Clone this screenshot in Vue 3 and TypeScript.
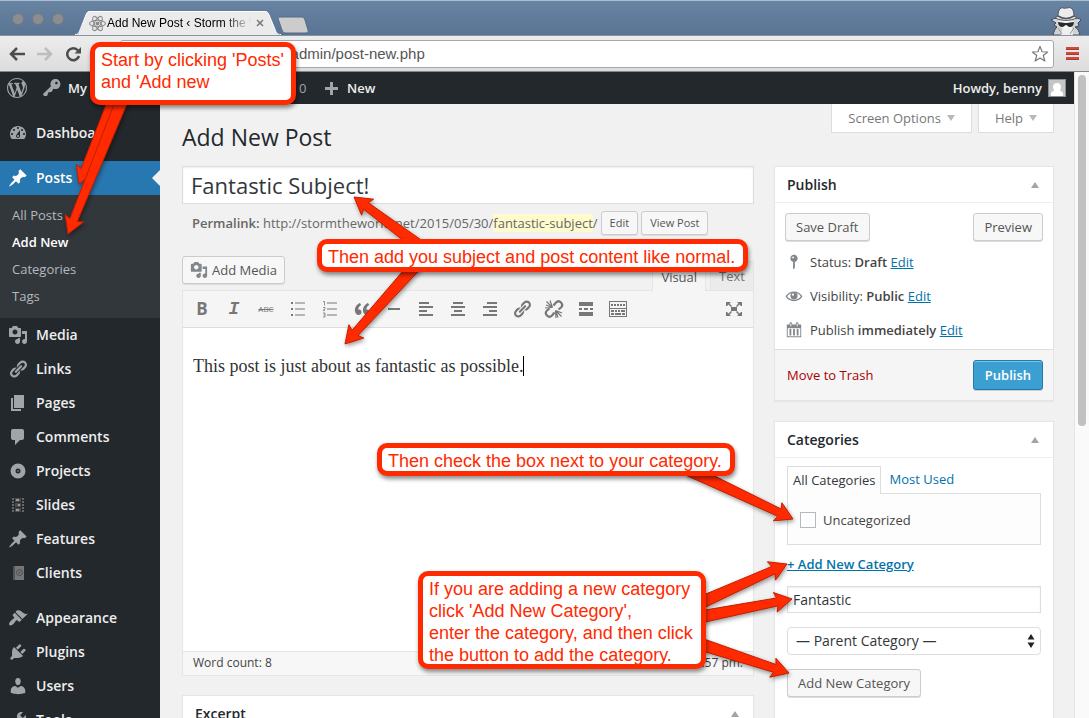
<script setup lang="ts">
import { ref } from 'vue'

interface MenuEntry {
  label: string
  icon: string
  spaced?: boolean
}

interface Point {
  x: number
  y: number
}

const icons: Record<string, string> = {
  dashboard:
    'M3.76 16h12.48c1.1-1.37 1.76-3.11 1.76-5 0-4.42-3.58-8-8-8s-8 3.58-8 8c0 1.89.66 3.63 1.76 5zM10 4c.55 0 1 .45 1 1s-.45 1-1 1-1-.45-1-1 .45-1 1-1zM6 6c.55 0 1 .45 1 1s-.45 1-1 1-1-.45-1-1 .45-1 1-1zm8 0c.55 0 1 .45 1 1s-.45 1-1 1-1-.45-1-1 .45-1 1-1zm-5.37 5.55L12 7v6c0 1.1-.9 2-2 2s-2-.9-2-2c0-.57.24-1.08.63-1.45zM4 10c.55 0 1 .45 1 1s-.45 1-1 1-1-.45-1-1 .45-1 1-1zm12 0c.55 0 1 .45 1 1s-.45 1-1 1-1-.45-1-1 .45-1 1-1zm-5 3c0-.55-.45-1-1-1s-1 .45-1 1 .45 1 1 1 1-.45 1-1z',
  pin: 'M10.44 3.02l1.82-1.82 6.36 6.35-1.83 1.82c-1.05-.68-2.48-.57-3.41.36l-.75.75c-.92.93-1.04 2.35-.35 3.41l-1.83 1.82-2.41-2.41-2.8 2.79c-.42.42-3.38 2.71-3.8 2.29s1.86-3.39 2.28-3.81l2.79-2.79L4.1 9.36l1.83-1.82c1.05.69 2.48.57 3.4-.36l.75-.75c.93-.92 1.05-2.35.36-3.41z',
  media:
    'M13 11V4c0-.55-.45-1-1-1h-1.67L9 1H5L3.67 3H2c-.55 0-1 .45-1 1v7c0 .55.45 1 1 1h10c.55 0 1-.45 1-1zM7 4.5c1.38 0 2.5 1.12 2.5 2.5S8.38 9.5 7 9.5 4.5 8.38 4.5 7 5.62 4.5 7 4.5zM14 6h5v10.5c0 1.38-1.12 2.5-2.5 2.5S14 17.88 14 16.5s1.12-2.5 2.5-2.5c.17 0 .34.02.5.05V9h-3V6zm-4 8.05V13h2v3.5c0 1.38-1.12 2.5-2.5 2.5S7 17.88 7 16.5 8.12 14 9.5 14c.17 0 .34.02.5.05z',
  link: 'M17.74 2.76c1.68 1.69 1.68 4.41 0 6.1l-1.53 1.52c-1.12 1.12-2.7 1.47-4.14 1.09l2.62-2.61.76-.77.76-.76c.84-.84.84-2.2 0-3.04-.84-.85-2.2-.85-3.04 0l-.77.76-3.38 3.38c-.37-1.44-.02-3.02 1.1-4.14l1.52-1.53c1.69-1.68 4.42-1.68 6.1 0zM8.59 13.43l5.34-5.34c.42-.42.42-1.1 0-1.52-.44-.43-1.13-.39-1.53 0l-5.33 5.34c-.42.42-.42 1.1 0 1.52.44.43 1.13.39 1.52 0zm-.76 2.29l4.14-4.15c.38 1.44.03 3.02-1.09 4.14l-1.52 1.53c-1.69 1.68-4.41 1.68-6.1 0-1.68-1.68-1.68-4.42 0-6.1l1.53-1.52c1.12-1.12 2.7-1.47 4.14-1.1l-4.14 4.15c-.85.84-.85 2.2 0 3.05.84.84 2.2.84 3.04 0z',
  page: 'M6 15V2h10v13H6zm-1 1h8v2H3V5h2v11z',
  comment: 'M5 2h9c1.1 0 2 .9 2 2v7c0 1.1-.9 2-2 2h-2l-5 5v-5H5c-1.1 0-2-.9-2-2V4c0-1.1.9-2 2-2z',
  disc: 'M10 2.5a7.5 7.5 0 1 0 0 15 7.5 7.5 0 0 0 0-15zm0 5a2.5 2.5 0 1 1 0 5 2.5 2.5 0 0 1 0-5zm0 1.7a.8.8 0 1 0 0 1.6.8.8 0 0 0 0-1.6z',
  brush:
    'M14.48 11.06L7.41 3.99l1.5-1.5c.5-.56 2.3-.47 3.51.32 1.21.8 1.43 1.28 2.91 2.1 1.18.64 2.45 1.26 4.45.85zm-.71.71L6.7 4.7 4.93 6.47c-.39.39-.39 1.02 0 1.41l1.06 1.06c.39.39.39 1.03 0 1.42-.6.6-1.43 1.11-2.21 1.69-.35.26-.7.53-1.01.84C1.43 14.23.4 16.08 1.4 17.07c.99 1 2.84-.03 4.18-1.36.31-.31.58-.66.85-1.02.57-.78 1.08-1.61 1.69-2.21.39-.39 1.02-.39 1.41 0l1.06 1.06c.39.39 1.02.39 1.41 0z',
  plug: 'M13.11 4.36L9.87 7.6 8 5.73l3.24-3.24c.35-.34 1.05-.2 1.56.32.52.51.66 1.21.31 1.55zm-8 1.77l.91-1.12 9.01 9.01-1.19.84c-.71.71-2.63 1.16-3.82 1.16H6.14L4.9 17.26c-.59.59-1.54.59-2.12 0-.59-.58-.59-1.53 0-2.12l1.24-1.24v-3.88c0-1.13.4-3.19 1.09-3.89zm7.26 3.97l3.24-3.24c.34-.35 1.04-.21 1.55.31.52.51.66 1.21.31 1.55l-3.24 3.25z',
  user: 'M10 9.25c-2.27 0-2.73-3.44-2.73-3.44C7 4.02 7.82 2 9.97 2c2.16 0 2.98 2.02 2.71 3.81 0 0-.41 3.44-2.68 3.44zm0 2.57L12.72 10c2.39 0 4.52 2.33 4.52 4.53v2.49s-3.65 1.13-7.24 1.13c-3.65 0-7.24-1.13-7.24-1.13v-2.49c0-2.25 1.94-4.48 4.47-4.48z',
  wrench:
    'M16.68 9.77c-1.34 1.34-3.3 1.67-4.95.99l-5.41 6.52c-.99.99-2.59.99-3.58 0s-.99-2.59 0-3.57l6.52-5.42c-.68-1.65-.35-3.61.99-4.95 1.28-1.28 3.12-1.62 4.72-1.06l-2.89 2.89 2.82 2.82 2.86-2.87c.53 1.58.18 3.39-1.08 4.65zM3.81 16.21c.4.39 1.04.39 1.43 0 .4-.4.4-1.04 0-1.43-.39-.4-1.03-.4-1.43 0-.39.39-.39 1.03 0 1.43z',
  key: 'M16.95 2.58c1.96 1.95 1.96 5.12 0 7.07-1.51 1.51-3.75 1.84-5.59 1.01l-1.87 3.31-2.99.31L5 18H2l-1-2 7.95-7.69c-.92-1.87-.62-4.18.93-5.73 1.95-1.96 5.12-1.96 7.07 0zm-2.51 3.79c.74 0 1.33-.6 1.33-1.34 0-.73-.59-1.33-1.33-1.33-.73 0-1.33.6-1.33 1.33 0 .74.6 1.34 1.33 1.34z',
  wordpress:
    'M20 10c0-5.51-4.49-10-10-10C4.48 0 0 4.49 0 10c0 5.52 4.48 10 10 10 5.51 0 10-4.48 10-10zM7.78 15.37L4.37 6.22c.55-.02 1.17-.08 1.17-.08.5-.06.44-1.13-.06-1.11 0 0-1.45.11-2.37.11-.18 0-.37 0-.58-.01C4.12 2.69 6.87 1.11 10 1.11c2.33 0 4.45.87 6.05 2.34-.68-.11-1.65.39-1.65 1.58 0 .74.45 1.36.9 2.1.35.61.55 1.36.55 2.46 0 1.49-1.4 5-1.4 5l-3.03-8.37c.54-.02.82-.17.82-.17.5-.05.44-1.25-.06-1.22 0 0-1.44.12-2.38.12-.87 0-2.33-.12-2.33-.12-.5-.03-.56 1.2-.06 1.22l.92.08 1.26 3.41zM17.41 10c.24-.64.74-1.87.43-4.25.7 1.29 1.05 2.71 1.05 4.25 0 3.29-1.73 6.24-4.4 7.78.97-2.59 1.94-5.2 2.92-7.78zM6.1 18.09C3.12 16.65 1.11 13.53 1.11 10c0-1.3.23-2.48.72-3.59C3.25 10.3 4.67 14.2 6.1 18.09zm4.03-6.63l2.58 6.98c-.86.29-1.76.45-2.71.45-.79 0-1.57-.11-2.29-.33.81-2.38 1.62-4.74 2.42-7.1z',
  plus: 'M17 9v3h-5v5H9v-5H4V9h5V4h3v5h5z',
  status:
    'M14 6c0 1.86-1.28 3.41-3 3.86V16c0 1-2 2-2 2V9.86c-1.72-.45-3-2-3-3.86 0-2.21 1.79-4 4-4s4 1.79 4 4zM8 5c0 .55.45 1 1 1s1-.45 1-1-.45-1-1-1-1 .45-1 1z',
  calendar:
    'M15 4h3v14H2V4h3V3c0-.83.67-1.5 1.5-1.5S8 2.17 8 3v1h4V3c0-.83.67-1.5 1.5-1.5S15 2.17 15 3v1zM6 3v2.5c0 .28.22.5.5.5s.5-.22.5-.5V3c0-.28-.22-.5-.5-.5S6 2.72 6 3zm7 0v2.5c0 .28.22.5.5.5s.5-.22.5-.5V3c0-.28-.22-.5-.5-.5s-.5.22-.5.5zm4 14V8H3v9h14zM7 9v7H5V9h2zm4 0v7H9V9h2zm4 0v7h-2V9h2z',
  quote:
    'M9.49 13.22c0-.74-.2-1.38-.61-1.9-.62-.78-1.83-.88-2.53-.72-.29-1.65 1.11-3.75 2.92-4.65L7.88 4c-2.73 1.3-5.42 4.28-4.96 8.05C3.21 14.43 4.59 16 6.54 16c.85 0 1.56-.25 2.12-.75s.83-1.18.83-2.03zm8.05 0c0-.74-.2-1.38-.61-1.9-.63-.78-1.83-.88-2.53-.72-.29-1.65 1.11-3.75 2.92-4.65L15.93 4c-2.73 1.3-5.41 4.28-4.95 8.05.29 2.38 1.66 3.95 3.61 3.95.85 0 1.56-.25 2.12-.75s.83-1.18.83-2.03z',
  bullets: 'M3 3h2v2H3zM3 9h2v2H3zM3 15h2v2H3zM7 3.5h10v1H7zM7 9.5h10v1H7zM7 15.5h10v1H7z',
  rule: 'M4 9h12v2H4z',
  left: 'M3 3h10v2H3zM3 7h14v2H3zM3 11h8v2H3zM3 15h14v2H3z',
  center: 'M5 3h10v2H5zM3 7h14v2H3zM6 11h8v2H6zM3 15h14v2H3z',
  right: 'M7 3h10v2H7zM3 7h14v2H3zM9 11h8v2H9zM3 15h14v2H3z',
  more: 'M3 3h14v4H3zM3 9h3v2H3zM8 9h4v2H8zM14 9h3v2h-3zM3 13h14v4H3z',
  kitchen:
    'M1 2h18v16H1zM2 3v6h16V3zM2 10v7h16v-7zM3 5h2v2H3zM6 5h2v2H6zM9 5h2v2H9zM12 5h2v2h-2zM15 5h2v2h-2zM3 11h3v2H3zM7 11h2v2H7zM10 11h2v2h-2zM13 11h4v2h-4zM3 14h3v2H3zM7 14h6v2H7zM14 14h3v2h-3z',
  expand:
    'M7 8h6v4H7zM2 3h5L5.500 4.500 8 7 7 8 4.500 5.500 3 7H2zM18 3v4h-1L15.500 5.500 13 8l-1-1 2.500-2.500L13 3zM2 17v-4h1l1.500 1.500L7 12l1 1-2.500 2.500L7 17zM18 17h-5l1.500-1.500L12 13l1-1 2.500 2.500L17 13h1z',
}

const lowerMenu: MenuEntry[] = [
  { label: 'Media', icon: 'media' },
  { label: 'Links', icon: 'link' },
  { label: 'Pages', icon: 'page' },
  { label: 'Comments', icon: 'comment' },
  { label: 'Projects', icon: 'disc' },
  { label: 'Slides', icon: 'film' },
  { label: 'Features', icon: 'pin' },
  { label: 'Clients', icon: 'book' },
  { label: 'Appearance', icon: 'brush', spaced: true },
  { label: 'Plugins', icon: 'plug' },
  { label: 'Users', icon: 'user' },
  { label: 'Tools', icon: 'wrench' },
]

const submenu = ['All Posts', 'Add New', 'Categories', 'Tags']

const tools: { name: string; icon: string }[] = [
  { name: 'Bold', icon: 'bold' },
  { name: 'Italic', icon: 'italic' },
  { name: 'Strikethrough', icon: 'strike' },
  { name: 'Bulleted list', icon: 'bullets' },
  { name: 'Numbered list', icon: 'numbers' },
  { name: 'Blockquote', icon: 'quote' },
  { name: 'Horizontal line', icon: 'rule' },
  { name: 'Align left', icon: 'left' },
  { name: 'Align center', icon: 'center' },
  { name: 'Align right', icon: 'right' },
  { name: 'Insert link', icon: 'link' },
  { name: 'Remove link', icon: 'unlink' },
  { name: 'Read more', icon: 'more' },
  { name: 'Toolbar toggle', icon: 'kitchen' },
]

const title = ref('Fantastic Subject!')
const body = ref('This post is just about as fantastic as possible.')
const newCategory = ref('Fantastic')
const uncategorized = ref(false)
const parent = ref('none')

/* Outline of an arrow whose shaft widens towards its tail. */
function arrow(from: Point, to: Point): string {
  const length = Math.hypot(to.x - from.x, to.y - from.y)
  const ux = (to.x - from.x) / length
  const uy = (to.y - from.y) / length
  const at = (back: number, side: number) =>
    `${(to.x - ux * back - uy * side).toFixed(1)},${(to.y - uy * back + ux * side).toFixed(1)}`
  return [
    at(0, 0),
    at(17, 10),
    at(15, 4),
    at(length, 6),
    at(length, -6),
    at(15, -4),
    at(17, -10),
  ].join(' ')
}

const arrows = [
  arrow({ x: 115, y: 98 }, { x: 79, y: 184 }),
  arrow({ x: 123, y: 98 }, { x: 68, y: 234 }),
  arrow({ x: 425, y: 250 }, { x: 354, y: 197 }),
  arrow({ x: 416, y: 265 }, { x: 345, y: 344 }),
  arrow({ x: 689, y: 470 }, { x: 793, y: 519 }),
  arrow({ x: 700, y: 603 }, { x: 787, y: 564 }),
  arrow({ x: 700, y: 617 }, { x: 792, y: 599 }),
  arrow({ x: 700, y: 644 }, { x: 789, y: 673 }),
]
</script>

<template>
  <div class="window">
    <header class="titlebar">
      <div class="lights"><i></i><i></i><i></i></div>
      <div class="tab">
        <svg class="tab-shape" viewBox="0 0 206 25" preserveAspectRatio="none" aria-hidden="true">
          <path d="M0 25c4 0 4-3 5.500-6L11 4c1-3 2-4 5-4h173c3 0 4 1 5 4l6 15c1 3 2 6 6 6z" fill="#ebebeb" />
          <path d="M0 24.500c4 0 4-3 5.500-6L11 4c1-3 2-3.500 5-3.500h173c3 0 4 1 5 3.500l6 15c1 3 2 5.500 6 5.500" fill="none" stroke="#fff" />
        </svg>
        <svg class="atom" viewBox="0 0 16 16" aria-hidden="true">
          <g fill="none" stroke="#8b8b8b">
            <ellipse cx="8" cy="8" rx="7.500" ry="3" />
            <ellipse cx="8" cy="8" rx="7.500" ry="3" transform="rotate(60 8 8)" />
            <ellipse cx="8" cy="8" rx="7.500" ry="3" transform="rotate(120 8 8)" />
          </g>
          <circle cx="8" cy="8" r="1.800" fill="#8b8b8b" />
        </svg>
        <span class="tab-title">Add New Post ‹ Storm the W</span>
        <button class="tab-close" aria-label="Close tab">
          <svg viewBox="0 0 8 8"><path d="M1 1l6 6M7 1L1 7" stroke="#777" stroke-width="1.500" /></svg>
        </button>
      </div>
      <button class="new-tab" aria-label="New tab">
        <svg viewBox="0 0 32 18"><path d="M3 1h21c2 0 3 .500 4 3l3 10c.500 2 0 3-2 3H9c-2 0-3-.500-4-3L1.500 4C.800 2 1 1 3 1z" fill="#ccc" stroke="#566b86" /></svg>
      </button>
      <svg class="incognito" viewBox="0 0 34 28" aria-hidden="true">
        <path d="M4 28c1-4 2-6 4-8l-3-2 2-2-5-3c3-2 6-2 8-2h15c3 0 5 0 7 2l-3 3 1 3-4 1c3 2 4 4 5 8z" fill="#d2d2d2" stroke="#3d4a5c" />
        <path d="M14 20h9l1 8H12z" fill="#efefef" />
        <path d="M9 9c0-4 1-7 3-8 1-1 3 1 5 0 2 0 4-1 5 0 2 1 3 4 3 8l3 2c-7 3-15 3-22 0z" fill="#ececec" stroke="#4a5666" />
        <path d="M9 9c5 3 11 3 16 0" fill="none" stroke="#555" stroke-width="1.500" />
        <path d="M9 14h16l-2 6-6 2-6-2z" fill="#f5f5f5" />
        <path d="M9 15c3 0 5 1 7 1h2c2 0 4-1 7-1 0 3-2 5-4 5s-3-2-4-2-2 2-4 2-4-2-4-5z" fill="#2a2a2a" />
        <path d="M9 21l4 6M25 21l-4 6" stroke="#999" />
      </svg>
    </header>

    <div class="toolbar">
      <button class="nav" aria-label="Back">
        <svg viewBox="0 0 18 16"><path d="M9 2L3 8l6 6M3 8h14" fill="none" stroke="#4d4d4d" stroke-width="2.500" /></svg>
      </button>
      <button class="nav" aria-label="Forward">
        <svg viewBox="0 0 18 16"><path d="M9 2l6 6-6 6M15 8H1" fill="none" stroke="#bdbdbd" stroke-width="2.500" /></svg>
      </button>
      <button class="nav" aria-label="Reload">
        <svg viewBox="0 0 18 16"><path d="M14 4.500A6 6 0 1 0 15 10" fill="none" stroke="#4d4d4d" stroke-width="2.500" /><path d="M17 1v6.500h-6.500z" fill="#4d4d4d" /></svg>
      </button>
      <div class="address">
        <input class="url" aria-label="Address" value="stormtheworld.net/wp-admin/post-new.php" />
        <button class="star" aria-label="Bookmark">
          <svg viewBox="0 0 20 20"><path d="M10 1.500l2.300 6 6.200.300-4.900 3.900 1.800 6.200-5.400-3.500-5.400 3.500 1.800-6.200L1.500 7.800l6.200-.300z" fill="#fff" stroke="#777" stroke-width="1.300" stroke-linejoin="round" /></svg>
        </button>
      </div>
      <button class="burger" aria-label="Menu"><i></i><i></i><i></i></button>
    </div>

    <div class="viewport">
      <div class="site">
        <nav class="adminbar" aria-label="Toolbar">
          <a href="#" aria-label="WordPress"><svg class="ico wp" viewBox="0 0 20 20"><path :d="icons.wordpress" /></svg></a>
          <a href="#" class="sites"><svg class="ico" viewBox="0 0 20 20"><path :d="icons.key" /></svg>My</a>
          <a href="#" class="count">0</a>
          <a href="#" class="new"><svg class="ico" viewBox="0 0 20 20"><path :d="icons.plus" /></svg>New</a>
          <a href="#" class="howdy">Howdy, benny
            <svg class="avatar" viewBox="0 0 18 18" aria-hidden="true">
              <rect width="18" height="18" fill="#8c8f94" />
              <rect x="1" y="1" width="16" height="16" fill="#c5c5c5" />
              <path d="M9 4a4 4 0 0 1 4 4c0 2-1 3-1 4 2 0 3 1 3 3v2H3v-2c0-2 1-3 3-3 0-1-1-2-1-4a4 4 0 0 1 4-4z" fill="#fff" />
            </svg>
          </a>
        </nav>

        <div class="columns">
          <nav class="sidebar" aria-label="Main menu">
            <a href="#" class="item"><svg class="ico" viewBox="0 0 20 20"><path :d="icons.dashboard" fill-rule="evenodd" /></svg>Dashboard</a>
            <a href="#" class="item spaced current"><svg class="ico" viewBox="0 0 20 20"><path :d="icons.pin" /></svg>Posts</a>
            <div class="submenu">
              <a v-for="name in submenu" :key="name" href="#" :class="{ active: name === 'Add New' }">{{ name }}</a>
            </div>
            <a v-for="m in lowerMenu" :key="m.label" href="#" class="item" :class="{ spaced: m.spaced }">
              <svg v-if="m.icon === 'film'" class="ico" viewBox="0 0 20 20">
                <path d="M4 3h2v2H4zM4 6h2v2H4zM4 9h2v2H4zM4 12h2v2H4zM4 15h2v2H4zM14 3h2v2h-2zM14 6h2v2h-2zM14 9h2v2h-2zM14 12h2v2h-2zM14 15h2v2h-2z" fill="#666" />
                <path d="M7 3h6v4H7zM7 8h6v4H7zM7 13h6v4H7z" fill="#4e4e4e" />
                <path d="M8 4h3v2H8zM10 9h2v2h-2zM8 14h3v2H8z" fill="#999" />
              </svg>
              <svg v-else-if="m.icon === 'book'" class="ico" viewBox="0 0 20 20">
                <path d="M5 3h11v14H5z" fill="#777" />
                <path d="M5 3h2v14H5z" fill="#505356" />
                <circle cx="11.500" cy="9.500" r="3" fill="none" stroke="#4a4d50" />
                <circle cx="11.500" cy="9.500" r="1" fill="#4a4d50" />
              </svg>
              <svg v-else class="ico" viewBox="0 0 20 20"><path :d="icons[m.icon]" fill-rule="evenodd" /></svg>
              {{ m.label }}
            </a>
          </nav>

          <main class="content">
            <div class="head">
              <h1>Add New Post</h1>
              <div class="meta">
                <button>Screen Options <i></i></button>
                <button>Help <i></i></button>
              </div>
            </div>

            <div class="split">
              <section class="primary">
                <input v-model="title" class="title" aria-label="Title" />
                <div class="permalink">
                  <p><strong>Permalink:</strong> http://stormtheworld.net/2015/05/30/<mark>fantastic-subject</mark>/</p>
                  <button class="btn small">Edit</button>
                  <button class="btn small">View Post</button>
                </div>

                <div class="media-row">
                  <button class="btn add-media"><svg class="ico" viewBox="0 0 20 20"><path :d="icons.media" fill-rule="evenodd" /></svg>Add Media</button>
                  <div class="modes">
                    <button class="mode on">Visual</button>
                    <button class="mode">Text</button>
                  </div>
                </div>

                <div class="editor">
                  <div class="tools">
                    <button v-for="t in tools" :key="t.name" :aria-label="t.name">
                      <b v-if="t.icon === 'bold'" class="glyph-b">B</b>
                      <i v-else-if="t.icon === 'italic'" class="glyph-i">I</i>
                      <s v-else-if="t.icon === 'strike'" class="glyph-s">ABC</s>
                      <svg v-else-if="t.icon === 'numbers'" viewBox="0 0 20 20">
                        <path d="M7 3.500h10v1H7zM7 9.500h10v1H7zM7 15.500h10v1H7z" />
                        <path d="M3 2.500h1.500v4M3 8.500h2v1.500l-2 1.500h2M3 14h2v4H3M3.500 16H5" fill="none" stroke="currentColor" stroke-width=".8" />
                      </svg>
                      <svg v-else-if="t.icon === 'unlink'" viewBox="0 0 20 20">
                        <g fill="none" stroke="currentColor" stroke-width="2.200">
                          <path d="M9.500 6.500l2.500-3c1.500-1.500 3.500-1.500 5 0s1.500 3.500 0 5l-2.500 2" />
                          <path d="M10.500 13.500L8 16.500c-1.500 1.500-3.500 1.500-5 0s-1.500-3.500 0-5l2.500-2" />
                        </g>
                        <path d="M8.500 8.500L2 6M8.500 8.500L2.500 2.500M8.500 8.500L6 1.500M8.500 8.500L1 9M11.500 11.500L18 14M11.500 11.500l6 6M11.500 11.500L14 18.500M11.500 11.500l.500 7.500" stroke="currentColor" stroke-width="1.200" />
                      </svg>
                      <svg v-else viewBox="0 0 20 20"><path :d="icons[t.icon]" fill-rule="evenodd" /></svg>
                    </button>
                    <button class="full" aria-label="Distraction-free writing"><svg viewBox="0 0 20 20"><path :d="icons.expand" /></svg></button>
                  </div>
                  <div class="page">
                    <textarea v-model="body" rows="1" aria-label="Post content"></textarea>
                    <span class="caret"></span>
                  </div>
                  <div class="statusbar"><span>Word count: 8</span><span>2:57 pm.</span></div>
                </div>

                <div class="box excerpt">
                  <h2>Excerpt<i class="toggle"></i></h2>
                </div>
              </section>

              <aside class="secondary">
                <div class="box">
                  <h2>Publish<i class="toggle"></i></h2>
                  <div class="pub-actions">
                    <button class="btn">Save Draft</button>
                    <button class="btn">Preview</button>
                  </div>
                  <ul class="facts">
                    <li><svg class="ico" viewBox="0 0 20 20"><path :d="icons.status" fill-rule="evenodd" /></svg><span>Status: <b>Draft</b> <a href="#">Edit</a></span></li>
                    <li>
                      <svg class="ico" viewBox="0 0 20 20">
                        <path d="M1.500 10.500C5.500 4 14.500 4 18.500 10.500 14.500 16.500 5.500 16.500 1.500 10.500z" fill="#fff" stroke="currentColor" stroke-width="1.500" />
                        <circle cx="10" cy="9.800" r="4" /><circle cx="8.800" cy="8.500" r="1.200" fill="#fff" />
                      </svg><span>Visibility: <b>Public</b> <a href="#">Edit</a></span>
                    </li>
                    <li><svg class="ico" viewBox="0 0 20 20"><path :d="icons.calendar" fill-rule="evenodd" /></svg><span>Publish <b>immediately</b> <a href="#">Edit</a></span></li>
                  </ul>
                  <div class="pub-foot">
                    <a href="#" class="trash">Move to Trash</a>
                    <button class="btn primary-btn">Publish</button>
                  </div>
                </div>

                <div class="box">
                  <h2>Categories<i class="toggle"></i></h2>
                  <div class="cats">
                    <div class="cat-tabs">
                      <button class="on">All Categories</button>
                      <button>Most Used</button>
                    </div>
                    <div class="cat-panel">
                      <label><input v-model="uncategorized" type="checkbox" />Uncategorized</label>
                    </div>
                    <a href="#" class="add-link">+ Add New Category</a>
                    <input v-model="newCategory" class="cat-name" aria-label="New category name" />
                    <div class="select">
                      <select v-model="parent" aria-label="Parent category">
                        <option value="none">— Parent Category —</option>
                      </select>
                      <svg viewBox="0 0 8 14" aria-hidden="true"><path d="M4 0l3.500 5.500H.500zM4 14l3.500-5.500H.500z" fill="#222" /></svg>
                    </div>
                    <button class="btn">Add New Category</button>
                  </div>
                </div>
              </aside>
            </div>
          </main>
        </div>
      </div>
      <div class="scrollbar"><i></i></div>
    </div>

    <svg class="arrows" viewBox="0 0 1089 718" aria-hidden="true">
      <polygon v-for="points in arrows" :key="points" :points="points" />
    </svg>
    <p class="note note-start">Start by clicking 'Posts'<br />and 'Add new</p>
    <p class="note note-subject">Then add you subject and post content like normal.</p>
    <p class="note note-check">Then check the box next to your category.</p>
    <p class="note note-category">If you are adding a new category<br />click 'Add New Category',<br />enter the category, and then click<br />the button to add the category.</p>
  </div>
</template>

<style>
html,
body {
  margin: 0;
  background: #f1f1f1;
}
</style>

<style scoped>
* {
  box-sizing: border-box;
}
.window {
  position: relative;
  display: flex;
  flex-direction: column;
  height: 100vh;
  overflow: hidden;
  font: 13px/18px 'Open Sans', sans-serif;
  color: #444;
}
button,
input,
select,
textarea {
  font: inherit;
  color: inherit;
  margin: 0;
}
button {
  padding: 0;
  border: 0;
  background: none;
  white-space: nowrap;
}
a {
  color: #0073aa;
}
h1,
h2,
p,
ul {
  margin: 0;
  padding: 0;
}
svg {
  display: block;
  flex: none;
}

/* browser frame */
.titlebar {
  flex: none;
  display: flex;
  align-items: flex-end;
  height: 36px;
  background: linear-gradient(#6884a3, #5a7492);
  border-top: 1px solid #a9bccf;
  border-bottom: 1px solid #8892a0;
}
.lights {
  display: flex;
  gap: 8px;
  width: 75px;
  padding: 0 0 10px 12px;
}
.lights i {
  width: 12px;
  height: 12px;
  border-radius: 50%;
  background: #8b8d91;
  border: 1px solid #74797f;
}
.tab {
  position: relative;
  display: flex;
  align-items: center;
  width: 206px;
  height: 24px;
  padding: 0 17px 0 14px;
  font: 12px/16px 'Liberation Sans', sans-serif;
  color: #000;
}
.tab-shape {
  position: absolute;
  inset: 0;
  width: 100%;
  height: 100%;
}
.atom {
  position: relative;
  width: 17px;
  height: 17px;
  margin-right: 1px;
}
.tab-title {
  position: relative;
  flex: 1;
  overflow: hidden;
  white-space: nowrap;
  -webkit-mask-image: linear-gradient(90deg, #000 80%, transparent);
  mask-image: linear-gradient(90deg, #000 80%, transparent);
}
.tab-close {
  position: relative;
  width: 8px;
  margin-left: 4px;
}
.new-tab {
  width: 32px;
  height: 20px;
  margin-left: -4px;
}
.incognito {
  width: 34px;
  height: 28px;
  margin: 0 6px 0 auto;
}
.toolbar {
  flex: none;
  display: flex;
  align-items: center;
  gap: 10px;
  height: 36px;
  padding: 0 10px 0 8px;
  background: linear-gradient(#ededed, #dcdcdc);
  border-bottom: 1px solid #868686;
}
.nav,
.nav svg {
  width: 18px;
  height: 16px;
}
.address {
  flex: 1;
  display: flex;
  align-items: center;
  height: 28px;
  margin: 0 2px 0 28px;
  padding: 0 4px 0 4px;
  background: #fff;
  border: 1px solid #a8a8a8;
  border-radius: 3px;
}
.url {
  flex: 1;
  min-width: 0;
  padding: 0 0 0 18px;
  border: 0;
  outline: 0;
  background: none;
  font: 15px/20px 'Liberation Sans', sans-serif;
  color: #555;
}
.star svg {
  width: 18px;
  height: 18px;
}
.burger {
  display: grid;
  gap: 2px;
  width: 13px;
}
.burger i {
  height: 3px;
  background: #cf4a3b;
  border-bottom: 1px solid #a93a2d;
}
.viewport {
  flex: 1;
  min-height: 0;
  display: flex;
}
.scrollbar {
  flex: none;
  width: 15px;
  padding: 3px 0 0 3px;
  background: #fafafa;
  border-left: 1px solid #e5e5e5;
}
.scrollbar i {
  display: block;
  width: 8px;
  height: 351px;
  border-radius: 4px;
  background: #c1c1c1;
}

/* admin bar */
.site {
  flex: 1;
  min-width: 0;
  display: flex;
  flex-direction: column;
  overflow: hidden;
}
.adminbar {
  flex: none;
  display: flex;
  align-items: center;
  height: 32px;
  padding: 0 8px 0 7px;
  background: #23282d;
  font-weight: 600;
}
.adminbar a {
  display: flex;
  align-items: center;
  color: #eee;
  text-decoration: none;
  white-space: nowrap;
}
.ico {
  width: 20px;
  height: 20px;
  fill: currentColor;
  color: #a0a5aa;
}
.adminbar .sites {
  gap: 6px;
  width: 257px;
  margin-left: 15px;
}
.adminbar .count {
  width: 22px;
  color: #a0a5aa;
  font-weight: 400;
}
.adminbar .new {
  gap: 6px;
}
.adminbar .howdy {
  gap: 6px;
  margin-left: auto;
}
.avatar {
  width: 18px;
  height: 18px;
}

/* sidebar */
.columns {
  flex: 1;
  min-height: 0;
  display: flex;
}
.sidebar {
  flex: none;
  width: 160px;
  padding-top: 12px;
  background: #23282d;
  overflow: hidden;
}
.item {
  display: flex;
  align-items: center;
  gap: 8px;
  height: 34px;
  padding-left: 8px;
  font-size: 14px;
  font-weight: 600;
  color: #eee;
  text-decoration: none;
}
.spaced {
  margin-top: 11px;
}
.current {
  position: relative;
  background: #2777b0;
  color: #fff;
}
.current .ico {
  color: #fff;
}
.current::after {
  content: '';
  position: absolute;
  right: 0;
  border: 8px solid transparent;
  border-right-color: #f1f1f1;
  border-left: 0;
}
.submenu {
  padding: 7px 0 8px 12px;
  background: #32373c;
}
.submenu a {
  display: block;
  height: 27px;
  line-height: 27px;
  font-weight: 400;
  color: #b4b9be;
  text-decoration: none;
}
.submenu .active {
  color: #fff;
  font-weight: 600;
}

/* content */
.content {
  flex: 1;
  min-width: 0;
  padding: 0 20px 0 22px;
  background: #f1f1f1;
}
.head {
  display: flex;
  justify-content: space-between;
  height: 62px;
}
h1 {
  padding-top: 19px;
  font-size: 23px;
  line-height: 29px;
  font-weight: 400;
  color: #23282d;
}
.meta {
  display: flex;
  align-items: flex-start;
  gap: 6px;
}
.meta button {
  display: flex;
  align-items: center;
  gap: 6px;
  height: 29px;
  padding: 0 16px;
  background: #fff;
  border: 1px solid #ddd;
  border-top: 0;
  color: #777;
}
.meta i {
  border: 4px solid transparent;
  border-top: 6px solid #b4b9be;
  border-bottom: 0;
}
.split {
  display: flex;
  gap: 20px;
}
.primary {
  flex: 1;
  min-width: 0;
}
.secondary {
  flex: none;
  width: 280px;
}
.title {
  display: block;
  width: 100%;
  height: 38px;
  padding: 0 8px;
  border: 1px solid #ddd;
  background: #fff;
  box-shadow: inset 0 1px 2px #eee;
  font-size: 22px;
  color: #32373c;
}
.permalink {
  display: flex;
  align-items: center;
  gap: 3px;
  height: 38px;
  padding-left: 10px;
  color: #666;
}
.permalink p {
  white-space: nowrap;
}
.permalink strong {
  font-weight: 600;
}
mark {
  background: #fffbcc;
  color: inherit;
}
.btn {
  height: 28px;
  padding: 0 10px;
  border: 1px solid #ccc;
  border-radius: 3px;
  background: #f7f7f7;
  box-shadow: 0 1px 0 #ddd;
  color: #555;
}
.btn.small {
  height: 24px;
  padding: 0 8px;
  font-size: 11px;
}
.media-row {
  display: flex;
  align-items: flex-end;
  justify-content: space-between;
  height: 48px;
}
.add-media {
  display: flex;
  align-items: center;
  gap: 4px;
  padding: 0 7px;
  margin-bottom: 6px;
}
.add-media .ico {
  width: 18px;
  height: 18px;
  color: #82878c;
}
.modes {
  display: flex;
  gap: 4px;
}
.mode {
  height: 29px;
  padding: 0 8px;
  border: 1px solid #e5e5e5;
  border-bottom: 0;
  background: #ebebeb;
  color: #777;
}
.mode.on {
  position: relative;
  margin-bottom: -1px;
  height: 30px;
  background: #f5f5f5;
  color: #555;
}
.editor {
  border: 1px solid #e5e5e5;
  background: #fff;
}
.tools {
  display: flex;
  align-items: center;
  gap: 12px;
  height: 37px;
  padding: 0 9px;
  background: #f5f5f5;
  border-bottom: 1px solid #ddd;
  color: #777;
}
.tools button {
  flex: none;
  display: flex;
  align-items: center;
  justify-content: center;
  width: 20px;
  height: 20px;
}
.tools svg {
  width: 20px;
  height: 20px;
  fill: currentColor;
}
.tools .full {
  margin-left: auto;
}
.glyph-b {
  font-size: 17px;
}
.glyph-i {
  font: italic 700 18px/20px 'Liberation Mono', monospace;
}
.glyph-s {
  font-size: 8px;
}
.page {
  display: flex;
  align-items: flex-start;
  height: 323px;
  padding: 28px 10px 0;
}
textarea {
  field-sizing: content;
  max-width: 100%;
  padding: 0;
  border: 0;
  outline: 0;
  resize: none;
  overflow: hidden;
  background: none;
  font: 18px/20px 'Liberation Serif', serif;
  color: #333;
}
.caret {
  width: 1px;
  height: 20px;
  background: #000;
}
.statusbar {
  display: flex;
  justify-content: space-between;
  height: 24px;
  padding: 0 10px;
  line-height: 22px;
  font-size: 12px;
  background: #f7f7f7;
  border-top: 1px solid #e5e5e5;
}
.box {
  margin-bottom: 20px;
  background: #fff;
  border: 1px solid #e5e5e5;
  box-shadow: 0 1px 1px rgba(0, 0, 0, 0.04);
}
.excerpt {
  margin-top: 19px;
}
h2 {
  display: flex;
  align-items: center;
  justify-content: space-between;
  height: 36px;
  padding: 0 14px 0 12px;
  border-bottom: 1px solid #eee;
  font-size: 14px;
  font-weight: 600;
  color: #23282d;
}
.toggle {
  border: 4px solid transparent;
  border-bottom: 6px solid #a0a5aa;
  border-top: 0;
}
.pub-actions {
  display: flex;
  justify-content: space-between;
  padding: 10px 10px 0;
}
.facts {
  list-style: none;
  padding: 4px 10px 2px;
}
.facts li {
  display: flex;
  align-items: center;
  gap: 7px;
  height: 34px;
}
.facts .ico {
  width: 18px;
  height: 18px;
  color: #82878c;
}
.facts b {
  font-weight: 600;
}
.pub-foot {
  display: flex;
  align-items: center;
  justify-content: space-between;
  height: 51px;
  padding: 0 10px 0 12px;
  background: #f5f5f5;
  border-top: 1px solid #ddd;
}
.trash {
  color: #a00;
  text-decoration: none;
}
.primary-btn {
  height: 30px;
  padding: 0 11px;
  background: #3ba0d1;
  border-color: #2578ac;
  box-shadow: inset 0 1px 0 #78c8e6, 0 1px 0 #ccc;
  color: #fff;
  font-weight: 600;
}
.cats {
  display: flex;
  flex-direction: column;
  align-items: flex-start;
  padding: 8px 12px 40px;
}
.cat-tabs {
  display: flex;
  height: 28px;
}
.cat-tabs button {
  padding: 0 8px 2px;
  color: #0073aa;
}
.cat-tabs .on {
  position: relative;
  padding: 0 5px 2px;
  border: 1px solid #ddd;
  border-bottom: 0;
  background: #fdfdfd;
  color: #32373c;
}
.cat-panel {
  align-self: stretch;
  height: 52px;
  margin-top: -1px;
  padding: 0 12px;
  border: 1px solid #ddd;
  background: #fdfdfd;
}
.cat-panel label {
  display: flex;
  align-items: center;
  gap: 7px;
  height: 52px;
}
.cat-panel input {
  appearance: none;
  width: 16px;
  height: 16px;
  border: 1px solid #b4b9be;
  background: #fff;
}
.add-link {
  margin: 10px 0 13px;
  font-weight: 600;
}
.cat-name {
  width: 100%;
  height: 27px;
  padding: 0 5px;
  border: 1px solid #ddd;
  background: #fff;
  box-shadow: inset 0 1px 2px #eee;
  font-size: 14px;
  color: #32373c;
}
.select {
  position: relative;
  width: 100%;
  margin: 14px 0;
}
select {
  display: block;
  appearance: none;
  width: 100%;
  height: 28px;
  padding: 0 8px;
  border: 1px solid #ddd;
  border-radius: 4px;
  background: #fff;
  font-size: 14px;
  color: #32373c;
}
.select svg {
  position: absolute;
  top: 7px;
  right: 6px;
  width: 8px;
  height: 14px;
}

/* annotations drawn over the window */
.arrows {
  position: absolute;
  top: 0;
  left: 0;
  width: 1089px;
  height: 718px;
  pointer-events: none;
  filter: drop-shadow(1px 2px 2px rgba(0, 0, 0, 0.4));
}
.arrows polygon {
  fill: #ff2a00;
  stroke: #bf2000;
  stroke-linejoin: round;
}
.note {
  position: absolute;
  padding: 2px 6px;
  border: 5px solid #ff2a00;
  border-radius: 10px;
  background: #fff;
  box-shadow: 1px 3px 4px rgba(0, 0, 0, 0.45);
  font: 18px/22px 'Liberation Sans', sans-serif;
  color: #ff2a00;
  white-space: nowrap;
}
.note-start {
  left: 90px;
  top: 42px;
  width: 206px;
  height: 63px;
}
.note-subject {
  left: 317px;
  top: 239px;
  width: 431px;
  height: 33px;
}
.note-check {
  left: 377px;
  top: 443px;
  width: 358px;
  height: 33px;
}
.note-category {
  left: 418px;
  top: 571px;
  width: 288px;
  height: 98px;
}
</style>
